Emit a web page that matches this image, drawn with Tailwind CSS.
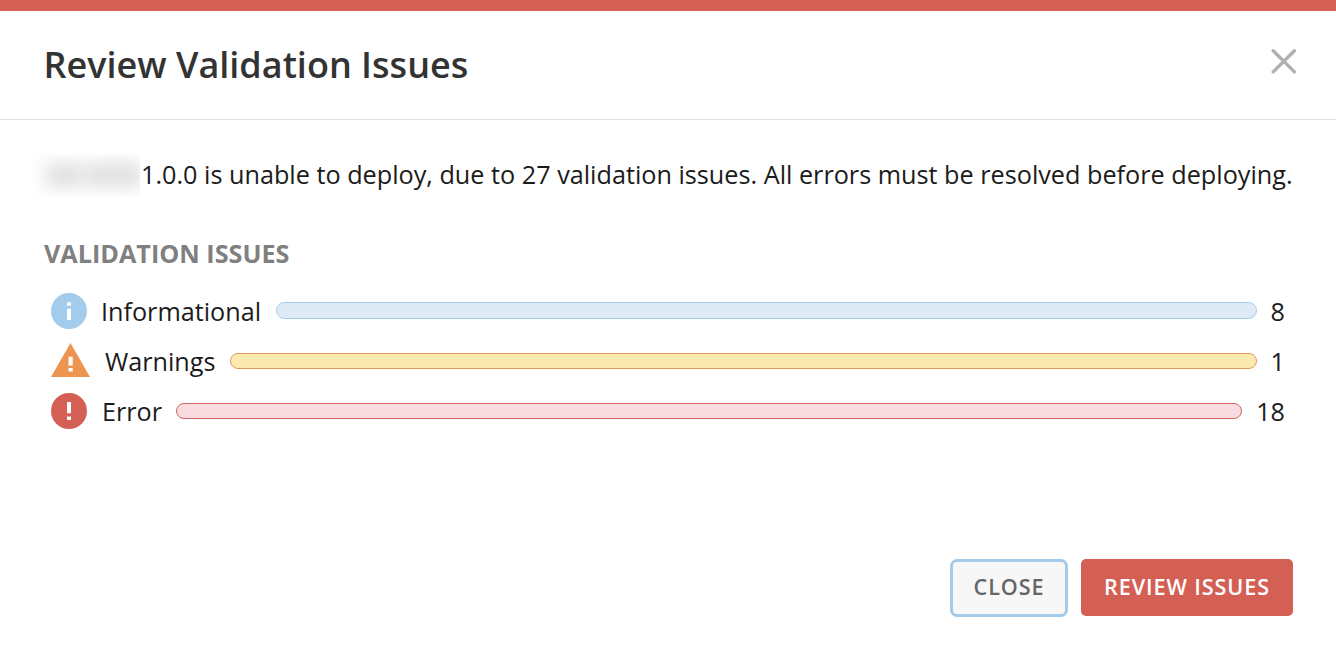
<!DOCTYPE html>
<html lang="en"><head><meta charset="utf-8"><title>Review Validation Issues</title>
<script src="https://cdn.jsdelivr.net/npm/@tailwindcss/browser@4"></script></head>
<body class="h-[658px] overflow-hidden bg-white font-['Open_Sans',sans-serif] text-[#1b1b1b]">
<div class="flex h-full flex-col border-t-[11px] border-[#d46055]">
<header class="flex h-[109px] shrink-0 justify-between border-b border-[#e3e3e3] pr-[39px] pl-[43.500px]">
<h1 class="mt-[30px] text-[36px] leading-[48px] font-semibold text-[#333]">Review Validation Issues</h1>
<svg class="mt-[37px] size-[26px]" viewBox="0 0 26 26" fill="none" stroke="#b0b0b0" stroke-width="3.4" stroke-linecap="round"><path d="M2.200 2.700 23.400 23.900M23.400 2.700 2.200 23.900"/></svg>
</header>
<main class="flex grow flex-col pr-[43px] pl-11">
<div class="mt-[38px] flex h-[34px] items-center text-[25.220px] whitespace-nowrap"><span class="-ml-[14px] flex h-[42px] w-[110px] shrink-0 items-center overflow-hidden pl-[16px]"><span class="flex gap-1 blur-[9px]"><span class="h-6 w-9 bg-[#dedede]"></span><span class="h-6 w-[56px] bg-[#dedede]"></span></span></span><p class="ml-[1px]">1.0.0 is unable to deploy, due to 27 validation issues. All errors must be resolved before deploying.</p></div>
<h2 class="mt-[44px] text-[25.2px] leading-[34px] font-bold text-[#808080]">VALIDATION ISSUES</h2>
<ul class="mt-[16px] pr-2 pl-[7px] text-[25.2px]">
<li class="flex h-[50px] items-center"><svg class="size-9 shrink-0" viewBox="0 0 36 36"><circle cx="18" cy="18" r="18" fill="#a3cbec"/><path fill="#fff" d="M16 9.300h4v3.400h-4zM16 15.800h4v11.200h-4z"/></svg><span class="ml-[14px] pt-[2px]">Informational</span><span class="mr-[14px] ml-[15px] h-[17px] grow rounded-full border border-[#a3cbec] bg-[#deebf7] -mt-px"></span><span class="pt-[2px]">8</span></li>
<li class="flex h-[50px] items-center"><svg class="mb-[2px] h-[34px] w-[39px] shrink-0" viewBox="0 0 39 34"><path fill="#ed9550" d="M19.500 0 39 34H0z"/><path fill="#fff" d="M17.500 13.800h4.200v8.600h-4.200zM17.500 25h4.200v3.600h-4.200z"/></svg><span class="ml-[15px] pt-[2px]">Warnings</span><span class="mr-[14px] ml-[15px] h-4 grow rounded-full border border-[#e09a5c] bg-[#fbe9b0]"></span><span class="pt-[2px]">1</span></li>
<li class="flex h-[50px] items-center"><svg class="size-9 shrink-0" viewBox="0 0 36 36"><circle cx="18" cy="18" r="18" fill="#d46055"/><path fill="#fff" d="M16 9h4v11.200h-4zM16 23.400h4v3.600h-4z"/></svg><span class="ml-[15px] pt-[2px]">Error</span><span class="mr-[14px] ml-[14px] h-4 grow rounded-full border border-[#cd6663] bg-[#f8dcdf]"></span><span class="pt-[2px]">18</span></li>
</ul>
<div class="mt-auto mb-[41px] flex items-start justify-end gap-[13px] text-[21.600px] font-semibold tracking-[0.900px]">
<button class="h-[58px] w-[118px] rounded-[7px] border-[3px] border-[#a3cbec] bg-[#f7f7f7] pb-[2px] text-[#666]">CLOSE</button>
<button class="h-[57px] w-[212px] rounded-[5px] bg-[#d46055] pb-[1px] text-white">REVIEW ISSUES</button>
</div>
</main></div></body></html>
